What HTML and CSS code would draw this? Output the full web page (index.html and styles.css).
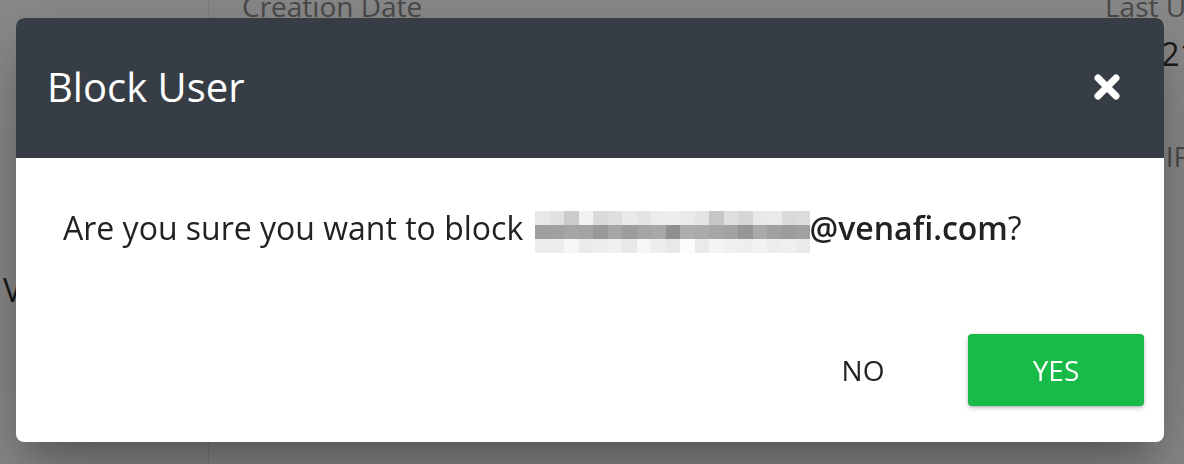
FILE: index.html
```html
<!DOCTYPE html>
<html lang="en">
<head>
<meta charset="utf-8">
<title>Block User</title>
<link rel="stylesheet" href="styles.css">
</head>
<body>
<div class="page">
  <aside class="sidebar">
    <div class="nav-item">View</div>
  </aside>
  <main class="content">
    <div class="details">
      <div class="field">
        <div class="label">Creation Date</div>
        <div class="value">Jun 21, 2021</div>
      </div>
      <div class="field">
        <div class="label">Last Updated</div>
        <div class="value">Jun 21, 2021</div>
        <div class="label label-next">Last IP Address</div>
      </div>
    </div>
  </main>
</div>

<div class="overlay">
  <div class="dialog" role="dialog" aria-labelledby="dlg-title">
    <header class="dialog-header">
      <h2 id="dlg-title" class="dialog-title">Block User</h2>
      <button class="close-btn" aria-label="Close">
        <svg class="close-icon" width="28" height="28" viewBox="0 0 28 28">
          <line x1="5" y1="5" x2="23" y2="23"/>
          <line x1="23" y1="5" x2="5" y2="23"/>
        </svg>
      </button>
    </header>
    <div class="dialog-body">
      <p class="message">Are you sure you want to block <svg class="redacted" width="275" height="42" viewBox="0 0 275 42" shape-rendering="crispEdges"><g><rect x="0" y="0" width="14.5" height="14" fill="#e8e8e8"/><rect x="14.5" y="0" width="14.5" height="14" fill="#e2e2e2"/><rect x="29" y="0" width="14.5" height="14" fill="#cbcbcb"/><rect x="43.5" y="0" width="14.5" height="14" fill="#f2f2f2"/><rect x="58" y="0" width="14.5" height="14" fill="#dadada"/><rect x="72.5" y="0" width="14.5" height="14" fill="#dedede"/><rect x="87" y="0" width="14.5" height="14" fill="#e9e9e9"/><rect x="101.5" y="0" width="14.5" height="14" fill="#e4e4e4"/><rect x="116" y="0" width="14.5" height="14" fill="#ececec"/><rect x="130.5" y="0" width="14.5" height="14" fill="#eeeeee"/><rect x="145" y="0" width="14.5" height="14" fill="#eaeaea"/><rect x="159.5" y="0" width="14.5" height="14" fill="#e4e4e4"/><rect x="174" y="0" width="14.5" height="14" fill="#c6c6c6"/><rect x="188.5" y="0" width="14.5" height="14" fill="#dedede"/><rect x="203" y="0" width="14.5" height="14" fill="#d6d6d6"/><rect x="217.5" y="0" width="14.5" height="14" fill="#e8e8e8"/><rect x="232" y="0" width="14.5" height="14" fill="#eaeaea"/><rect x="246.5" y="0" width="14.5" height="14" fill="#dadada"/><rect x="261" y="0" width="14" height="14" fill="#dcdcdc"/></g><g><rect x="0" y="14" width="14.5" height="14" fill="#9e9e9e"/><rect x="14.5" y="14" width="14.5" height="14" fill="#a0a0a0"/><rect x="29" y="14" width="14.5" height="14" fill="#a5a5a5"/><rect x="43.5" y="14" width="14.5" height="14" fill="#a3a3a3"/><rect x="58" y="14" width="14.5" height="14" fill="#999999"/><rect x="72.5" y="14" width="14.5" height="14" fill="#a6a6a6"/><rect x="87" y="14" width="14.5" height="14" fill="#9d9d9d"/><rect x="101.5" y="14" width="14.5" height="14" fill="#a4a4a4"/><rect x="116" y="14" width="14.5" height="14" fill="#a8a8a8"/><rect x="130.5" y="14" width="14.5" height="14" fill="#8f8f8f"/><rect x="145" y="14" width="14.5" height="14" fill="#adadad"/><rect x="159.5" y="14" width="14.5" height="14" fill="#aaaaaa"/><rect x="174" y="14" width="14.5" height="14" fill="#a6a6a6"/><rect x="188.5" y="14" width="14.5" height="14" fill="#a2a2a2"/><rect x="203" y="14" width="14.5" height="14" fill="#959595"/><rect x="217.5" y="14" width="14.5" height="14" fill="#a9a9a9"/><rect x="232" y="14" width="14.5" height="14" fill="#a0a0a0"/><rect x="246.5" y="14" width="14.5" height="14" fill="#9c9c9c"/><rect x="261" y="14" width="14" height="14" fill="#a1a1a1"/></g><g><rect x="0" y="28" width="14.5" height="14" fill="#ececec"/><rect x="14.5" y="28" width="14.5" height="14" fill="#ececec"/><rect x="29" y="28" width="14.5" height="14" fill="#f6f6f6"/><rect x="43.5" y="28" width="14.5" height="14" fill="#eaeaea"/><rect x="58" y="28" width="14.5" height="14" fill="#eeeeee"/><rect x="72.5" y="28" width="14.5" height="14" fill="#f0f0f0"/><rect x="87" y="28" width="14.5" height="14" fill="#e8e8e8"/><rect x="101.5" y="28" width="14.5" height="14" fill="#f6f6f6"/><rect x="116" y="28" width="14.5" height="14" fill="#ededed"/><rect x="130.5" y="28" width="14.5" height="14" fill="#e8e8e8"/><rect x="145" y="28" width="14.5" height="14" fill="#fbfbfb"/><rect x="159.5" y="28" width="14.5" height="14" fill="#eaeaea"/><rect x="174" y="28" width="14.5" height="14" fill="#f4f4f4"/><rect x="188.5" y="28" width="14.5" height="14" fill="#f0f0f0"/><rect x="203" y="28" width="14.5" height="14" fill="#eeeeee"/><rect x="217.5" y="28" width="14.5" height="14" fill="#f2f2f2"/><rect x="232" y="28" width="14.5" height="14" fill="#ececec"/><rect x="246.5" y="28" width="14.5" height="14" fill="#efefef"/><rect x="261" y="28" width="14" height="14" fill="#eaeaea"/></g></svg><strong class="domain">@venafi.com</strong>?</p>
    </div>
    <footer class="dialog-actions">
      <button class="btn btn-flat">NO</button>
      <button class="btn btn-primary">YES</button>
    </footer>
  </div>
</div>
</body>
</html>
```

FILE: styles.css
```css
* {
  box-sizing: border-box;
}

html, body {
  margin: 0;
  padding: 0;
  width: 1184px;
  height: 464px;
  overflow: hidden;
}

body {
  font-family: "Open Sans", "Noto Sans", "Liberation Sans", sans-serif;
  background: #ffffff;
  color: #222222;
}

/* ---------- background page ---------- */
.page {
  display: grid;
  grid-template-columns: 209px 1fr;
  height: 464px;
}

.sidebar {
  border-right: 1px solid #e6e6e6;
  padding: 268px 0 0 3px;
  overflow: hidden;
}

.nav-item {
  font-size: 32px;
  color: #333333;
  white-space: nowrap;
}

.content {
  padding-left: 33px;
  overflow: hidden;
}

.details {
  display: grid;
  grid-template-columns: 863px auto;
  margin-top: -13px;
}

.field {
  white-space: nowrap;
}

.label {
  font-size: 28px;
  color: #8a8a8a;
}

.value {
  font-size: 32px;
  color: #333333;
  margin-top: 7px;
}

.label-next {
  margin-top: 62px;
}

/* ---------- overlay + dialog ---------- */
.overlay {
  position: fixed;
  inset: 0;
  background: rgba(0, 0, 0, 0.46);
  padding: 18px 20px 0 16px;
}

.dialog {
  background: #ffffff;
  border-radius: 8px;
  overflow: hidden;
  box-shadow:
    0 22px 30px -14px rgba(0, 0, 0, 0.22),
    0 48px 76px 6px rgba(0, 0, 0, 0.14),
    0 18px 92px 16px rgba(0, 0, 0, 0.12);
}

.dialog-header {
  height: 140px;
  background: #373d45;
  display: flex;
  align-items: center;
  justify-content: space-between;
  padding: 0 43px 2px 31px;
}

.dialog-title {
  margin: 0;
  font-size: 40px;
  font-weight: 400;
  color: #ffffff;
  line-height: 1.362;
}

.close-btn {
  background: none;
  border: 0;
  padding: 0;
  display: flex;
  cursor: pointer;
}

.close-icon line {
  stroke: #ffffff;
  stroke-width: 7;
  stroke-linecap: round;
}

.dialog-body {
  padding: 48px 47px 45px;
}

.message {
  margin: 0;
  font-size: 32px;
  line-height: 44px;
  color: #222222;
  white-space: nowrap;
}

.redacted {
  display: inline-block;
  vertical-align: -13px;
  margin-left: 3px;
}

.domain {
  font-weight: 600;
}

.dialog-actions {
  display: flex;
  justify-content: flex-end;
  gap: 17px;
  padding: 36px 20px 36px;
}

.btn {
  width: 176px;
  height: 72px;
  border: 0;
  border-radius: 4px;
  font-family: inherit;
  font-size: 28px;
  font-weight: 400;
  cursor: pointer;
  padding: 0;
}

.btn-flat {
  background: transparent;
  color: #222222;
}

.btn-primary {
  background: #18bb47;
  color: #ffffff;
  box-shadow: 0 2px 5px rgba(0, 0, 0, 0.22), 0 1px 2px rgba(0, 0, 0, 0.12);
}
```
